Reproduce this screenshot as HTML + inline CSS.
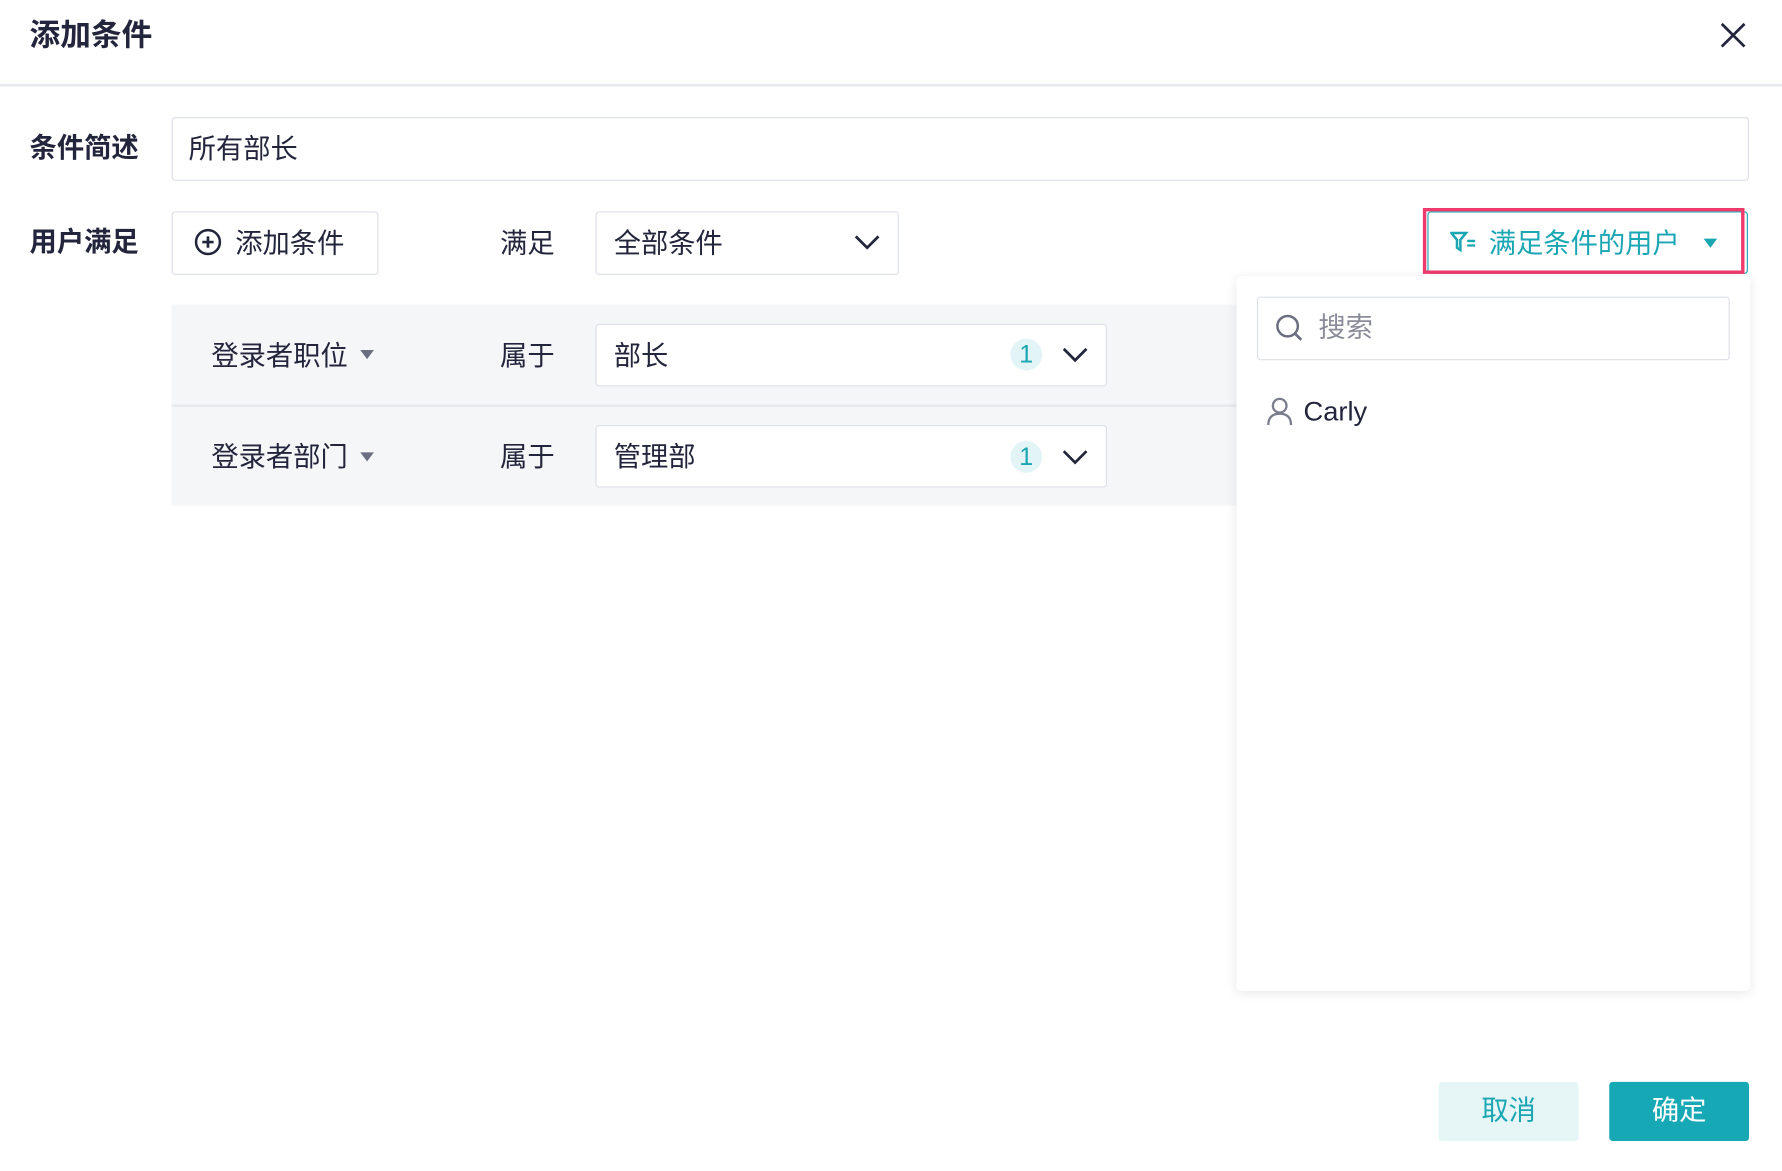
<!DOCTYPE html>
<html><head><meta charset="utf-8"><style>
html,body{margin:0;padding:0;width:1782px;height:1170px;overflow:hidden;background:#fff}
#w{position:absolute;left:0;top:0;width:1568px;height:1030px;transform:scale(1.13648);transform-origin:0 0;font-family:"Liberation Sans","Noto Sans CJK SC",sans-serif;color:#22253b}
.a{position:absolute}
.t{font-size:24px;line-height:1;white-space:nowrap}
.box{position:absolute;border:1px solid #dcdfe6;border-radius:3px;background:#fff;box-sizing:border-box}
.b{font-weight:bold}
</style></head><body><div id="w">
<div class="a t b" style="left:26px;top:18px;font-size:27px">添加条件</div>
<svg class="a" style="left:1513px;top:19px" width="24" height="24" viewBox="0 0 24 24"><path d="M2 2L22 22M22 2L2 22" stroke="#22253b" stroke-width="2.4"/></svg>
<div class="a" style="left:0;top:74px;width:1568px;height:2px;background:#e4e6eb"></div>

<div class="a t b" style="left:26px;top:119px">条件简述</div>
<div class="box" style="left:151px;top:103px;width:1388px;height:56px"></div>
<div class="a t" style="left:166px;top:120px">所有部长</div>

<div class="a t b" style="left:26px;top:202px">用户满足</div>
<div class="box" style="left:151px;top:186px;width:182px;height:56px"></div>
<svg class="a" style="left:171px;top:201px" width="24" height="24" viewBox="0 0 24 24"><circle cx="12" cy="12" r="10.5" fill="none" stroke="#22253b" stroke-width="2.2"/><path d="M12 7V17M7 12H17" stroke="#22253b" stroke-width="2.4"/></svg>
<div class="a t" style="left:207px;top:203px">添加条件</div>
<div class="a t" style="left:440px;top:203px">满足</div>
<div class="box" style="left:524px;top:186px;width:267px;height:56px"></div>
<div class="a t" style="left:540px;top:203px">全部条件</div>
<svg class="a" style="left:751px;top:205px" width="24" height="16" viewBox="0 0 24 16"><path d="M2 3L12 13L22 3" fill="none" stroke="#22253b" stroke-width="2.4"/></svg>

<div class="a" style="left:151px;top:268px;width:940px;height:177px;background:#f5f6f8"></div>
<div class="a" style="left:151px;top:356px;width:940px;height:2px;background:#e6e8ec"></div>
<div class="a t" style="left:186px;top:302px">登录者职位</div>
<div class="a" style="left:317px;top:308px;border-left:6px solid transparent;border-right:6px solid transparent;border-top:8px solid #6b6e80"></div>
<div class="a t" style="left:440px;top:302px">属于</div>
<div class="box" style="left:524px;top:285px;width:450px;height:55px"></div>
<div class="a t" style="left:540px;top:302px">部长</div>
<div class="a" style="left:889px;top:298px;width:28px;height:28px;border-radius:50%;background:#e2f4f5;color:#1aa6b3;font-size:22px;line-height:28px;text-align:center">1</div>
<svg class="a" style="left:934px;top:304px" width="24" height="16" viewBox="0 0 24 16"><path d="M2 3L12 13L22 3" fill="none" stroke="#22253b" stroke-width="2.4"/></svg>

<div class="a t" style="left:186px;top:391px">登录者部门</div>
<div class="a" style="left:317px;top:398px;border-left:6px solid transparent;border-right:6px solid transparent;border-top:8px solid #6b6e80"></div>
<div class="a t" style="left:440px;top:391px">属于</div>
<div class="box" style="left:524px;top:374px;width:450px;height:55px"></div>
<div class="a t" style="left:540px;top:391px">管理部</div>
<div class="a" style="left:889px;top:388px;width:28px;height:28px;border-radius:50%;background:#e2f4f5;color:#1aa6b3;font-size:22px;line-height:28px;text-align:center">1</div>
<svg class="a" style="left:934px;top:394px" width="24" height="16" viewBox="0 0 24 16"><path d="M2 3L12 13L22 3" fill="none" stroke="#22253b" stroke-width="2.4"/></svg>

<div class="a" style="left:1256px;top:186px;width:282px;height:55px;border:1px solid #1aa6b3;border-radius:3px;box-sizing:border-box"></div>
<div class="a" style="left:1252px;top:183px;width:283px;height:58px;border:3px solid #ef3a6c;box-sizing:border-box"></div>
<svg class="a" style="left:1276px;top:203px" width="24" height="20" viewBox="0 0 24 20"><path d="M1 2H14L9 8V17L6 15V8Z" fill="none" stroke="#1aa6b3" stroke-width="2.2"/><path d="M15 9H22M15 13H22" stroke="#1aa6b3" stroke-width="2"/></svg>
<div class="a t" style="left:1310px;top:203px;color:#1aa6b3">满足条件的用户</div>
<div class="a" style="left:1499px;top:210px;border-left:6px solid transparent;border-right:6px solid transparent;border-top:8px solid #1aa6b3"></div>

<div class="a" style="left:1088px;top:243px;width:452px;height:629px;background:#fff;border-radius:4px;box-shadow:0 2px 10px rgba(0,0,0,0.09)"></div>
<div class="box" style="left:1106px;top:261px;width:416px;height:56px"></div>
<svg class="a" style="left:1122px;top:276px" width="26" height="26" viewBox="0 0 26 26"><circle cx="11" cy="11" r="9" fill="none" stroke="#6b6e80" stroke-width="2.2"/><path d="M17.5 17.5L23 23" stroke="#6b6e80" stroke-width="2.4"/></svg>
<div class="a t" style="left:1160px;top:277px;color:#8a8c99">搜索</div>
<svg class="a" style="left:1114px;top:349px" width="24" height="26" viewBox="0 0 24 26"><circle cx="12" cy="8" r="6" fill="none" stroke="#7a7d8c" stroke-width="2"/><path d="M2 25C2 18 6 15 12 15C18 15 22 18 22 25" fill="none" stroke="#7a7d8c" stroke-width="2"/></svg>
<div class="a t" style="left:1147px;top:351px;font-size:24px">Carly</div>

<div class="a" style="left:1266px;top:952px;width:123px;height:52px;background:#e6f5f6;border-radius:3px;color:#1aa6b3;font-size:24px;line-height:52px;text-align:center">取消</div>
<div class="a" style="left:1416px;top:952px;width:123px;height:52px;background:#17a8b5;border-radius:3px;color:#fff;font-size:24px;line-height:52px;text-align:center">确定</div>
</div></body></html>
